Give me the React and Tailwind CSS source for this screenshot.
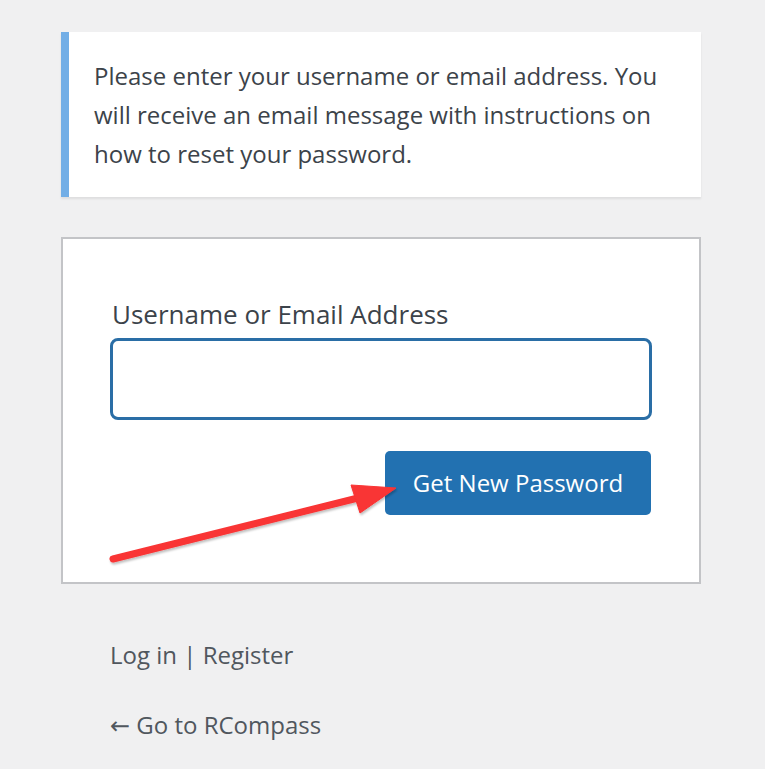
import React from 'react';

const font = { fontFamily: '"Open Sans", "Noto Sans", sans-serif' };

// red annotation arrow pointing at the button
function Arrow() {
  return (
    <svg
      className="absolute left-0 top-0 pointer-events-none"
      width="765"
      height="769"
      viewBox="0 0 765 769"
    >
      <defs>
        <filter id="shadow" x="-10%" y="-10%" width="120%" height="140%">
          <feDropShadow dx="1" dy="2" stdDeviation="1.2" floodColor="#000" floodOpacity="0.25" />
        </filter>
      </defs>
      <g filter="url(#shadow)" fill="#f93434" stroke="#f93434">
        <line x1="113" y1="559" x2="362" y2="497" strokeWidth="7" strokeLinecap="round" />
        <polygon points="396,488 351,485 360,513" strokeWidth="1" strokeLinejoin="round" />
      </g>
    </svg>
  );
}

export default function App() {
  return (
    <div className="relative min-h-screen bg-[#f0f0f1] pt-8" style={font}>
      <div className="ml-[61px] w-[640px]">
        {/* notice */}
        <div className="bg-white border-l-[8px] border-[#72aee6] pl-[25px] pr-4 py-[24px] shadow-[0_2px_2px_rgba(0,0,0,0.08)]">
          <p className="text-[24px] leading-[39px] text-[#3c434a]">
            Please enter your username or email address. You will receive an email message with instructions on how to reset your password.
          </p>
        </div>

        {/* form */}
        <form className="mt-10 bg-white border-2 border-[#c3c4c7] px-[47px] pt-[57px] pb-[67px] flex flex-col">
          <label className="text-[26px] leading-[36px] text-[#3c434a] pl-[2px]">
            Username or Email Address
          </label>
          <input
            type="text"
            className="mt-[6px] h-[82px] w-full rounded-[8px] border-[3.5px] border-[#2a6ea6] bg-white outline-none"
          />
          <div className="mt-[31px] flex justify-end pr-[1px]">
            <button
              type="button"
              className="h-[64px] w-[266px] rounded-[5px] bg-[#2271b1] text-white text-[24px]"
            >
              Get New Password
            </button>
          </div>
        </form>

        {/* links */}
        <div className="pl-[49px] mt-[53px] flex flex-col gap-[34px] text-[24px] leading-[36px] text-[#50575e]">
          <p>
            <a>Log in</a> | <a>Register</a>
          </p>
          <p>
            <a>
              <span className="font-['DejaVu_Sans']">←</span> Go to RCompass
            </a>
          </p>
        </div>
      </div>
      <Arrow />
    </div>
  );
}
